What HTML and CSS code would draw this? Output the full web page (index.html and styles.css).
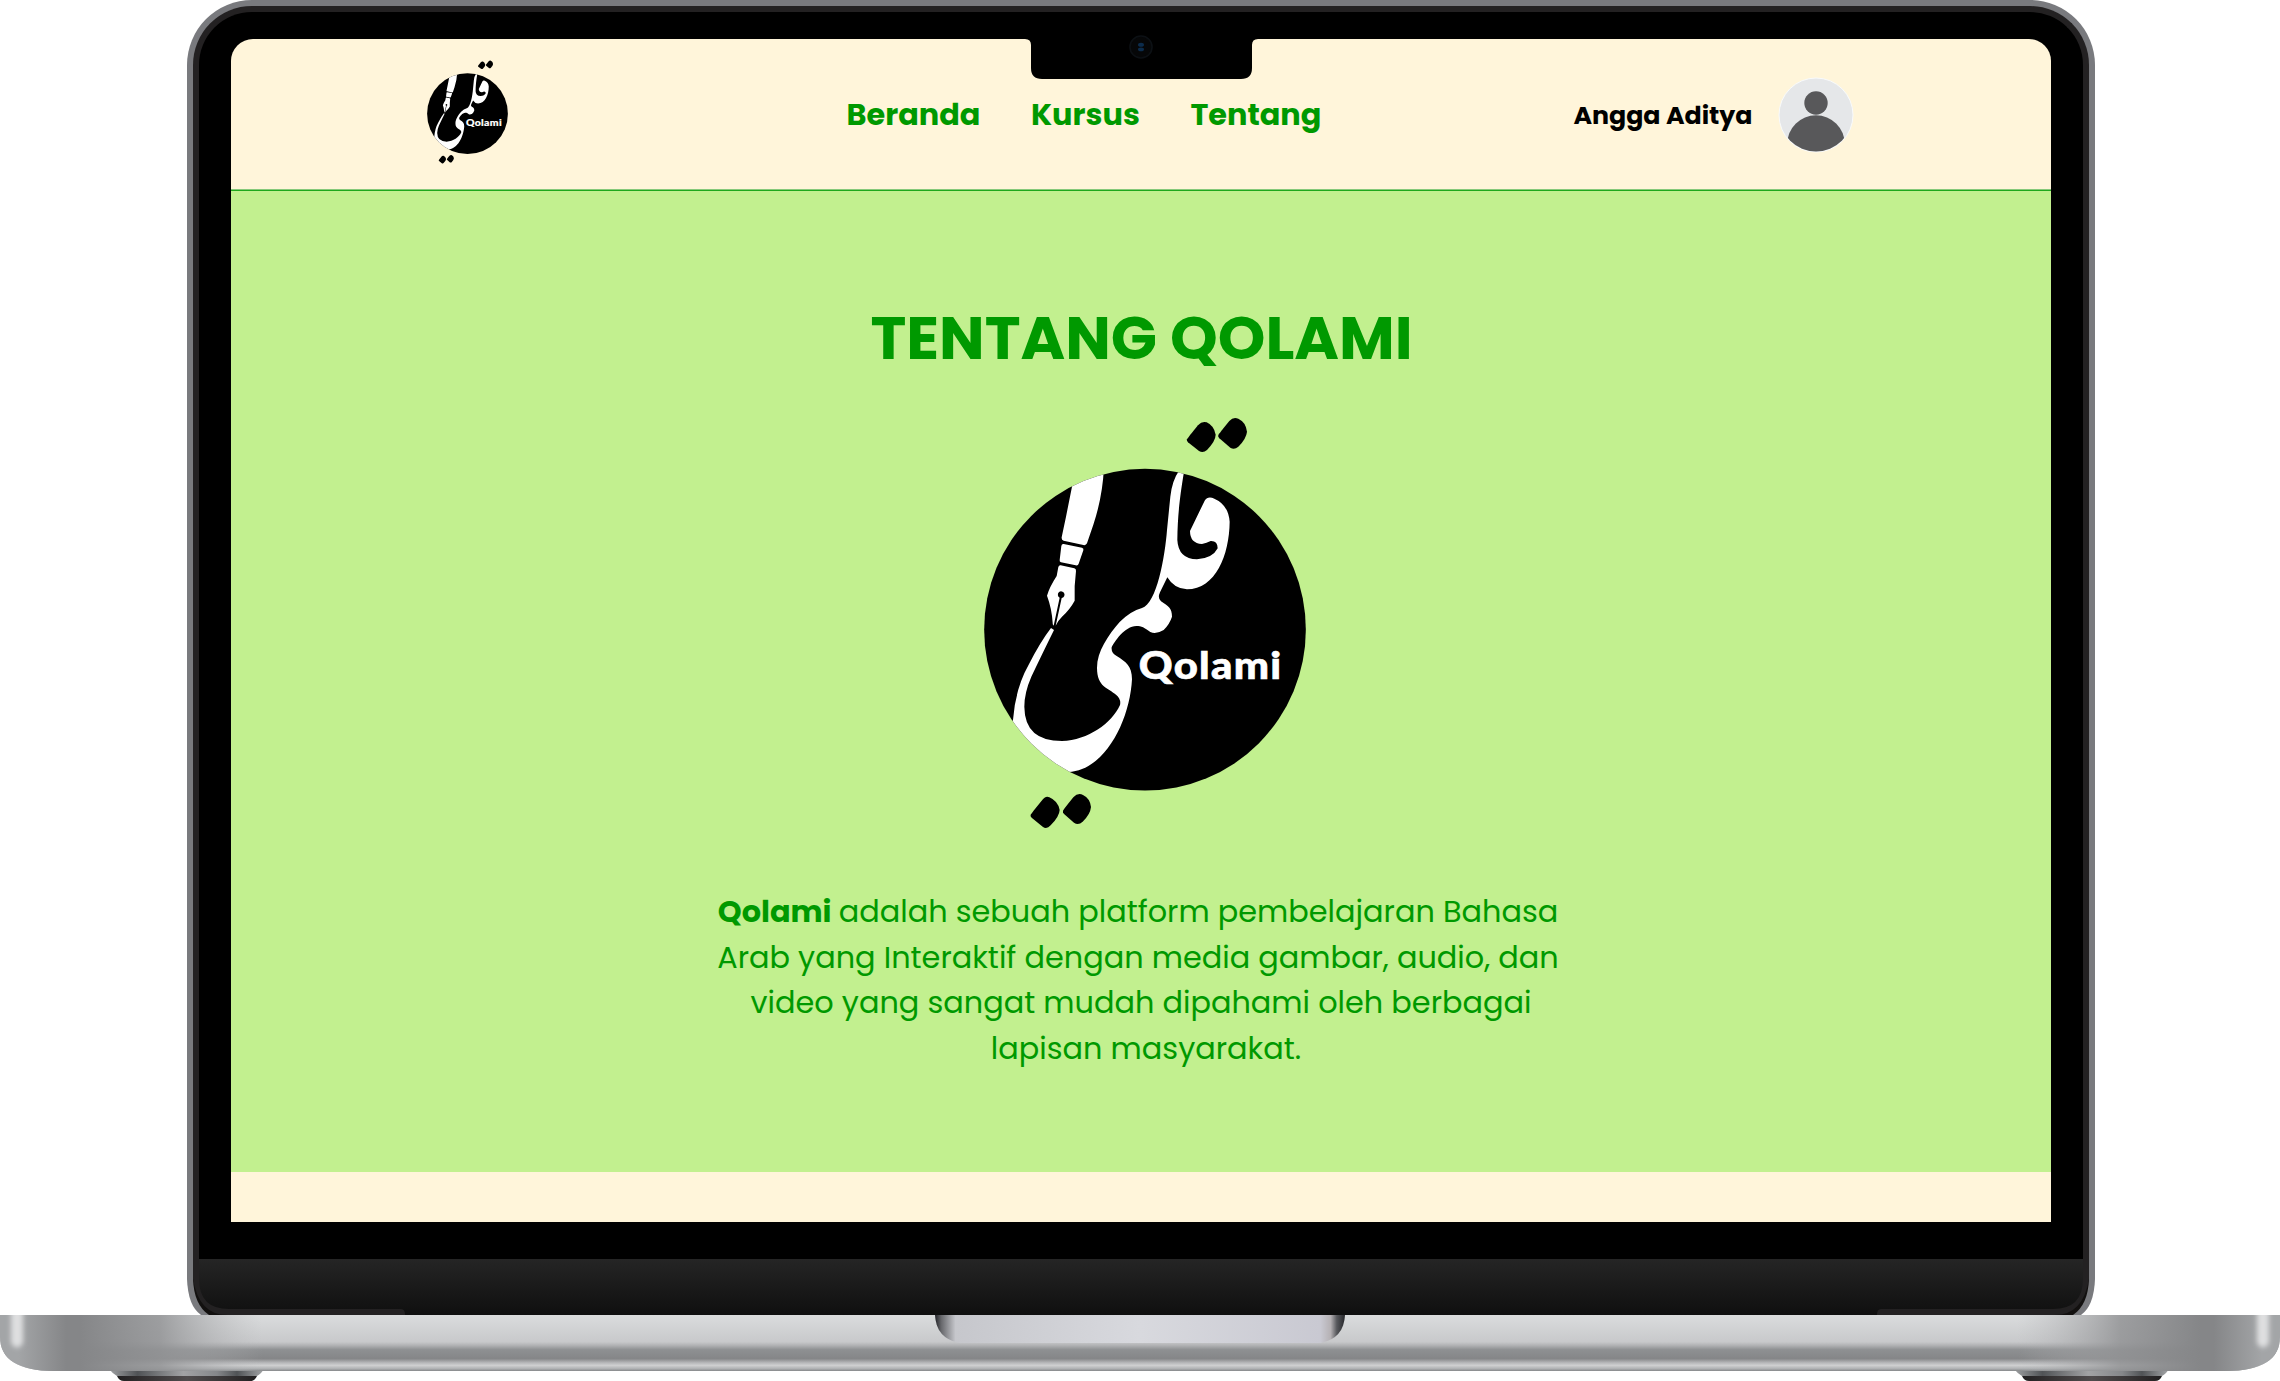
FILE: index.html
```html
<!DOCTYPE html>
<html lang="id">
<head>
<meta charset="utf-8">
<title>Tentang Qolami</title>
<link rel="stylesheet" href="styles.css">
</head>
<body>
<svg class="defs" width="0" height="0" aria-hidden="true">
  <defs>
    <clipPath id="disc"><circle cx="555" cy="689" r="482.5"/></clipPath>
    <symbol id="qolami" viewBox="0 0 1110 1350">
      <circle cx="555" cy="689" r="482.5" fill="#000"/>
      <g fill="#000">
        <path d="M681 118Q683 114 714 76Q726 62 740 67Q762 77 767 104Q767 122 741 150Q729 161 717 153L684 127Q679 122 681 118Z"/>
        <path d="M775 105Q777 101 808 63Q820 49 835 56Q858 67 861 95Q859 116 835 140Q823 151 811 143L778 115Q773 110 775 105Z"/>
        <path d="M212 1244Q214 1240 245 1202Q257 1186 268 1192Q294 1203 299 1230Q298 1250 272 1276Q260 1289 248 1280L215 1253Q210 1249 212 1244Z"/>
        <path d="M309 1232Q311 1228 340 1192Q354 1177 369 1185Q390 1195 393 1221Q391 1243 368 1265Q355 1277 342 1268L313 1243Q307 1238 309 1232Z"/>
      </g>
      <g fill="#fff" clip-path="url(#disc)">
        <path d="M340 240L432 200Q428 290 400 374L381 430Q378 437 370 435L311 422Q304 420 305 412L318 350Z"/>
        <path d="M311 432L366 443Q372 445 370 451L356 491Q354 498 347 496L303 487Q298 486 299 480L304 438Q305 431 311 432Z"/>
        <path d="M302 496L343 505Q349 507 348 513Q342 560 344 602Q330 628 306 650Q292 664 287 677L305 594A10 10 0 1 0 299 593L281 677Q277 672 278 668Q275 624 261 587Q268 562 290 528L295 501Q297 495 302 496Z"/>
        <path d="M273 684L282 690Q250 755 214 830Q193 878 193 920Q194 1023 306 1023C385 1020 455 970 480 915Q484 897 468 884C445 863 411 862 411 803C411 755 445 705 479 666Q512 633 546 624C590 612 615 470 621 390L631 290Q636 242 657 212L672 215C658 300 653 350 652 420Q655 477 711 478Q758 475 773 445Q773 422 752 423Q740 429 726 432Q690 430 690 393L734 302Q744 286 763 296Q805 314 809 365C808 465 767 567 681 568Q643 567 622 532L600 577Q592 594 603 604C625 618 636 625 636 650Q629 672 611 690Q588 704 571 696C553 683 545 678 529 678C494 678 462 727 455 742Q453 759 470 768C497 785 516 798 516 838C510 958 437 1111 325 1116L250 1130L140 1000L159 960Q166 865 206 794Q242 724 273 684Z"/>
      </g>
      <text transform="translate(536 837) scale(1.09 1)" textLength="392" lengthAdjust="spacing" class="logo-word">Qolami</text>
    </symbol>
  </defs>
</svg>
<main class="laptop">
  <div class="lid">
    <div class="rim">
      <div class="bezel">
        <div class="screen">
          <header class="topbar">
            <svg class="brand" viewBox="0 0 1110 1350"><use href="#qolami"/></svg>
            <nav class="menu">
              <a>Beranda</a>
              <a>Kursus</a>
              <a>Tentang</a>
            </nav>
            <div class="user">
              <span class="user-name">Angga Aditya</span>
              <svg class="avatar" viewBox="0 0 76 76">
                <defs><clipPath id="face"><circle cx="38" cy="38" r="36.5"/></clipPath></defs>
                <circle cx="38" cy="38" r="37" fill="#e5e7e9" stroke="#f8fafb" stroke-width="1"/>
                <g fill="#58585a" clip-path="url(#face)"><circle cx="38" cy="26" r="11.7"/><circle cx="38" cy="67" r="28.8"/></g>
              </svg>
            </div>
          </header>
          <section class="about">
            <h1 class="title">TENTANG QOLAMI</h1>
            <svg class="emblem" viewBox="0 0 1110 1350"><use href="#qolami"/></svg>
            <p class="copy">
              <span class="line line-wide"><b>Qolami</b> adalah sebuah platform pembelajaran Bahasa</span>
              <span class="line line-wide">Arab yang Interaktif dengan media gambar, audio, dan</span>
              <span class="line">video yang sangat mudah dipahami oleh berbagai</span>
              <span class="line line-last">lapisan masyarakat.</span>
            </p>
          </section>
        </div>
        <svg class="notch" viewBox="0 0 233 40">
          <path d="M0 0H233Q227 0 227 6V29Q227 40 216 40H17Q6 40 6 29V6Q6 0 0 0Z"/>
        </svg>
        <svg class="camera" viewBox="0 0 24 24">
          <circle cx="12" cy="12" r="11" fill="#060708" stroke="#0c1014" stroke-width="1.6"/>
          <ellipse cx="12" cy="9.8" rx="3" ry="2" fill="#0c2c4c"/><ellipse cx="12" cy="14.4" rx="3" ry="1.8" fill="#0c2c4c"/>
        </svg>
      </div>
    </div>
    <svg class="chin" viewBox="0 0 1908 56">
      <defs><linearGradient id="chinG" x2="0" y2="1"><stop offset="0" stop-color="#252525"/><stop offset="1" stop-color="#0f0f0f"/></linearGradient></defs>
      <path d="M0 0H1908V20Q1907 47 1894 56H14Q1 47 0 20Z" fill="#797a7e"/>
      <path d="M6 0H1902V20Q1901 46 1886 56H22Q7 46 6 20Z" fill="#12100f"/>
      <path d="M6 0H1902V20Q1896 56 1868 56H40Q12 56 6 20Z" fill="#232122"/>
      <path d="M12 0H1896V20Q1896 50 1866 50H1694Q1690 50 1690 56H218Q218 50 214 50H42Q12 50 12 20Z" fill="url(#chinG)"/>
    </svg>
  </div>
  <svg class="base" viewBox="0 0 2280 66">
    <defs>
      <linearGradient id="metal" x2="0" y2="1"><stop offset="0" stop-color="#dadcdd"/><stop offset=".48" stop-color="#c8c9cb"/><stop offset=".54" stop-color="#b2b3b5"/><stop offset=".62" stop-color="#8e9092"/><stop offset=".78" stop-color="#858688"/><stop offset=".85" stop-color="#b5b6b8"/><stop offset=".9" stop-color="#cfd0d1"/><stop offset=".96" stop-color="#aeb0b2"/><stop offset="1" stop-color="#858789"/></linearGradient>
      <linearGradient id="ends"><stop offset="0" stop-color="#a3a5a7"/><stop offset=".008" stop-color="#a3a5a7"/><stop offset=".029" stop-color="#858688"/><stop offset=".035" stop-color="#858688"/><stop offset=".07" stop-color="#929395" stop-opacity=".85"/><stop offset=".115" stop-color="#b2b3b5" stop-opacity="0"/><stop offset=".885" stop-color="#b2b3b5" stop-opacity="0"/><stop offset=".93" stop-color="#929395" stop-opacity=".85"/><stop offset=".965" stop-color="#858688"/><stop offset=".971" stop-color="#858688"/><stop offset=".992" stop-color="#a3a5a7"/><stop offset="1" stop-color="#a3a5a7"/></linearGradient>
      <linearGradient id="lip"><stop offset="0" stop-color="#222327"/><stop offset=".015" stop-color="#66676b"/><stop offset=".05" stop-color="#c6c7cc"/><stop offset=".5" stop-color="#d8d9de"/><stop offset=".94" stop-color="#c9c9d2"/><stop offset=".965" stop-color="#b5b1b4"/><stop offset=".98" stop-color="#57585c"/><stop offset="1" stop-color="#25262a"/></linearGradient>
      <linearGradient id="foot"><stop offset="0" stop-color="#9c9ea0"/><stop offset=".18" stop-color="#505356"/><stop offset=".48" stop-color="#a2a3a5"/><stop offset=".7" stop-color="#85878a"/><stop offset=".83" stop-color="#505356"/><stop offset="1" stop-color="#a1a3a5"/></linearGradient>
      <linearGradient id="rubber"><stop offset="0" stop-color="#222021"/><stop offset=".5" stop-color="#504c4d"/><stop offset="1" stop-color="#222021"/></linearGradient>
      <filter id="soft" x="-1" width="3" y="-.5" height="2"><feGaussianBlur stdDeviation="2.6"/></filter>
      <clipPath id="shell"><path d="M0 0H2280V22C2280 44 2262 56 2226 56H54C18 56 0 44 0 22Z"/></clipPath>
    </defs>
    <g id="pad"><path d="M110 55H263Q262 58 257 61H117Q112 58 110 55Z" fill="url(#foot)"/><path d="M117 61H257Q255 66 250 66H124Q119 66 117 61Z" fill="url(#rubber)"/></g>
    <use href="#pad" x="1905"/>
    <g clip-path="url(#shell)">
      <rect width="2280" height="56" fill="url(#metal)"/>
      <rect width="2280" height="56" fill="url(#ends)"/>
      <path d="M11 -9H23V28Q17 37 11 28ZM2257 -9H2269V28Q2263 37 2257 28Z" fill="#dedfe0" filter="url(#soft)"/>
    </g>
    <path d="M935 0H1345Q1344 23 1321 28H959Q936 23 935 0Z" fill="url(#lip)"/>
  </svg>
</main>
</body>
</html>
```
FILE: styles.css
```css
* { box-sizing: border-box; }
body { margin: 0; background: #fff; font-family: Poppins, Inter, "Open Sans", sans-serif; }
svg { display: block; }
.defs { position: absolute; }
.laptop { width: 2280px; height: 1381px; overflow: hidden; display: flex; flex-direction: column; align-items: center; }
.lid { width: 1908px; height: 1315px; margin-left: 2px; }
.rim { height: 1259px; padding: 6px 6px 0; background: #797a7e; border-radius: 65px 65px 0 0; }
.bezel { position: relative; height: 1253px; padding: 27px 32px 37px; border: 6px solid #232122; border-bottom: 0; background: #000; border-radius: 59px 59px 0 0; }
.screen { height: 1183px; border-radius: 22px 22px 0 0; overflow: hidden; background: #fff5da; }
.notch { position: absolute; left: 826px; top: 27px; width: 233px; height: 40px; }
.camera { position: absolute; left: 930px; top: 23px; width: 24px; height: 24px; }
.chin { width: 1908px; height: 56px; }
.base { width: 2280px; height: 66px; flex: none; }
.topbar { height: 152px; border-bottom: 1px solid #1fa81c; box-shadow: inset 0 -1px #86c97a; display: grid; grid-template-columns: 425.5px 1fr auto; padding: 0 197px 0 190px; align-items: center; }
.brand { width: 93px; height: 113px; margin-top: -5px; }
.menu { display: flex; gap: 50.6px; padding-top: 1px; color: #090; font-size: 30.33px; font-weight: 700; }
.user { display: flex; align-items: center; gap: 25.5px; }
.user-name { padding-top: 1px; font-size: 25.28px; font-weight: 700; color: #000; }
.avatar { width: 76px; height: 76px; }
.about { height: 981px; background: #c2f08f; display: flex; flex-direction: column; align-items: center; padding-top: 105px; color: #090; }
.title { margin: 0 0 0 1px; font-size: 60.66px; line-height: 84px; font-weight: 700; white-space: nowrap; }
.emblem { width: 370px; height: 450px; margin: 20px 0 0 8px; }
.copy { margin: 39px 0 0; font-size: 30.33px; line-height: 45.5px; text-align: center; }
.copy b { margin-right: -1px; }
.line { display: block; white-space: nowrap; }
.line-wide { margin: 0 3px 0 -3px; }
.line-last { padding-left: 10px; }
.logo-word { font-family: Lato, sans-serif; font-weight: 900; font-size: 115px; fill: #fff; stroke: #fff; stroke-width: 2px; }
```
